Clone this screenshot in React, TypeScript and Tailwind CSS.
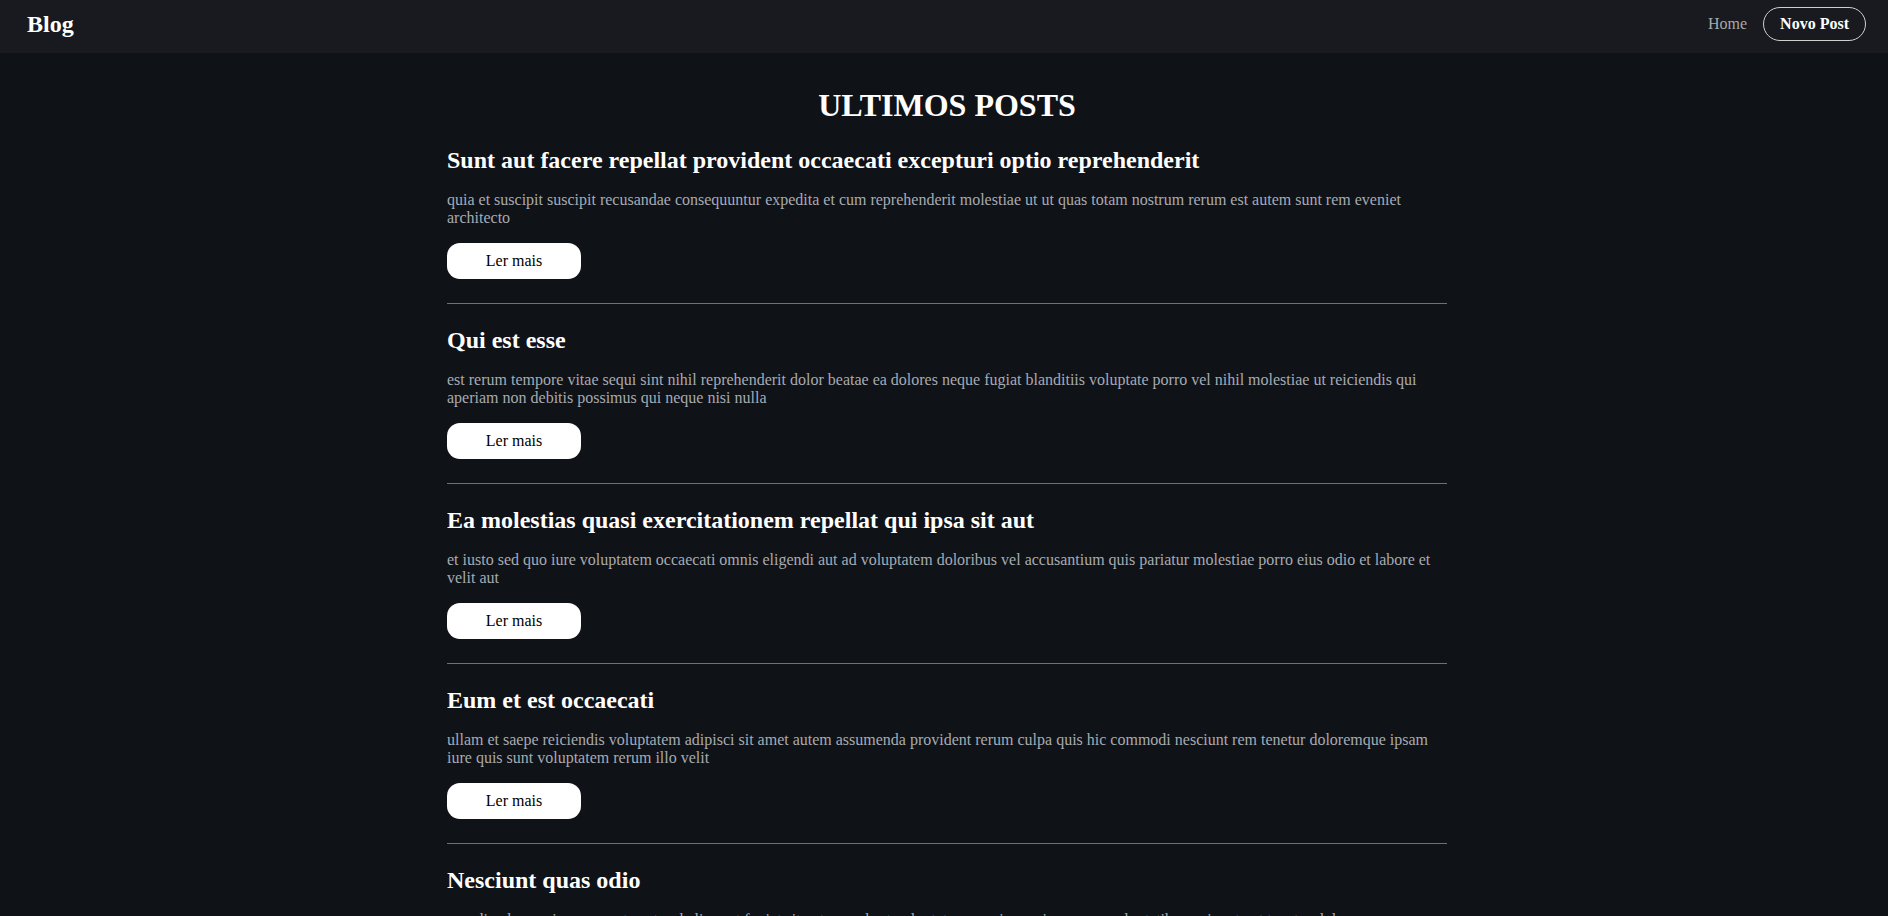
import React from "react";

const posts = [
  {
    title: "Sunt aut facere repellat provident occaecati excepturi optio reprehenderit",
    body: "quia et suscipit suscipit recusandae consequuntur expedita et cum reprehenderit molestiae ut ut quas totam nostrum rerum est autem sunt rem eveniet architecto",
  },
  {
    title: "Qui est esse",
    body: "est rerum tempore vitae sequi sint nihil reprehenderit dolor beatae ea dolores neque fugiat blanditiis voluptate porro vel nihil molestiae ut reiciendis qui aperiam non debitis possimus qui neque nisi nulla",
  },
  {
    title: "Ea molestias quasi exercitationem repellat qui ipsa sit aut",
    body: "et iusto sed quo iure voluptatem occaecati omnis eligendi aut ad voluptatem doloribus vel accusantium quis pariatur molestiae porro eius odio et labore et velit aut",
  },
  {
    title: "Eum et est occaecati",
    body: "ullam et saepe reiciendis voluptatem adipisci sit amet autem assumenda provident rerum culpa quis hic commodi nesciunt rem tenetur doloremque ipsam iure quis sunt voluptatem rerum illo velit",
  },
  {
    title: "Nesciunt quas odio",
    body: "repudiandae veniam quaerat sunt sed alias aut fugiat sit autem sed est voluptatem omnis possimus esse voluptatibus quis est aut tenetur dolor neque",
  },
  {
    title: "Dolorem eum magni eos aperiam quia",
    body: "ut aspernatur corporis harum nihil quis provident sequi mollitia nobis aliquid molestiae perspiciatis et ea nemo ab reprehenderit accusantium quas voluptate dolores velit et doloremque molestiae",
  },
];

export default function App() {
  return (
    <div className="min-h-screen bg-[#0f1217] text-white font-['Liberation_Serif','Times_New_Roman',serif]">
      <header className="h-[53px] bg-[#181a1f] flex items-center justify-between pb-[5px] pl-[27px] pr-[22px]">
        <span className="text-[24px] leading-[28px] font-bold text-white">Blog</span>
        <nav className="flex items-center gap-[16px]">
          <a className="text-[16px] leading-[18px] text-[#a9a9a9]">Home</a>
          <button className="h-[34px] px-[16px] rounded-full border border-[#cfcfcf] text-[16px] leading-[18px] font-bold text-white">
            Novo Post
          </button>
        </nav>
      </header>
      <main className="pl-[6px]">
        <div className="mx-auto w-[1000px] pt-[34px]">
          <h1 className="text-center text-[32px] leading-[37px] font-bold text-white">ULTIMOS POSTS</h1>
          {posts.map((p, i) => (
            <article key={i} className="pt-[22px]">
              <h2 className="text-[24px] leading-[28px] font-bold text-white">{p.title}</h2>
              <p className="mt-[17px] text-[16px] leading-[18px] text-[#a7abb2]">{p.body}</p>
              <button className="mt-[16px] w-[134px] h-[36px] rounded-[13px] bg-white text-black text-[16px] leading-[18px]">
                Ler mais
              </button>
              <hr className="mt-[24px] border-0 border-t border-[#707070]" />
            </article>
          ))}
        </div>
      </main>
    </div>
  );
}
